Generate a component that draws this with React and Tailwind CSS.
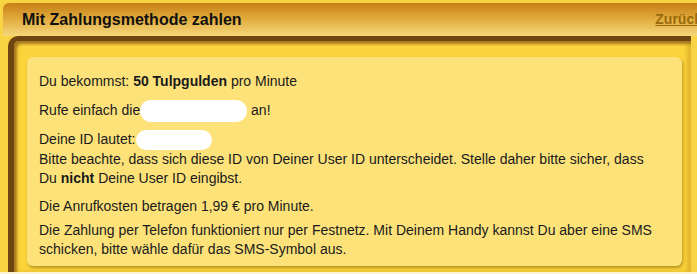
export default function App() {
  return (
    <div className="w-[697px] h-[274px] overflow-hidden bg-[#fbf3d3] font-['Liberation_Sans',Arial,sans-serif] text-[14px] text-[#1a1a1a]">
      <div className="w-[720px] h-[272px] bg-[#f8d445] pl-[3px] pt-[3px] flex flex-col">
        {/* Header */}
        <div className="h-[33px] rounded-tl-[6px] bg-linear-to-b from-[#c67f14] via-[#e2ad3e] to-[#f5d77a] flex items-center justify-between pl-[19px] pr-[18px]">
          <span className="font-bold text-[16px] text-[#111]">Mit Zahlungsmethode zahlen</span>
          <a href="#" className="font-bold text-[14px] text-[#9a6a0c] underline">Zurück</a>
        </div>

        {/* Body */}
        <div className="flex-1 ml-[5px] mr-[29px] rounded-tl-[10px] border-l-[6px] border-t-[5px] border-[#6d4612] bg-[#fbd43c] shadow-[inset_3px_3px_3px_#a7781e,inset_-4px_0_4px_#e0b52c] pl-[13px] pr-[9px] pt-[16px] pb-[6px]">
          <div className="h-full rounded-[6px] bg-[#fde27a] shadow-[1px_2px_3px_#b8951f] pl-[12px] pr-[26px] pt-[15px] leading-[19px]">
            <p className="mb-[9px]">
              Du bekommst: <b>50 Tulpgulden</b> pro Minute
            </p>
            <p className="mb-[8px]">
              Rufe einfach die<span className="inline-block align-middle w-[107px] h-[22px] rounded-full bg-white"></span> an!
            </p>
            <p className="mb-[9px]">
              Deine ID lautet:<span className="inline-block align-middle w-[76px] h-[20px] rounded-full bg-white"></span>
              <br />
              Bitte beachte, dass sich diese ID von Deiner User ID unterscheidet. Stelle daher bitte sicher, dass Du <b>nicht</b> Deine User ID eingibst.
            </p>
            <p className="mb-[5px]">Die Anrufkosten betragen 1,99 € pro Minute.</p>
            <p>
              Die Zahlung per Telefon funktioniert nur per Festnetz. Mit Deinem Handy kannst Du aber eine SMS schicken, bitte wähle dafür das SMS-Symbol aus.
            </p>
          </div>
        </div>
      </div>
    </div>
  )
}
